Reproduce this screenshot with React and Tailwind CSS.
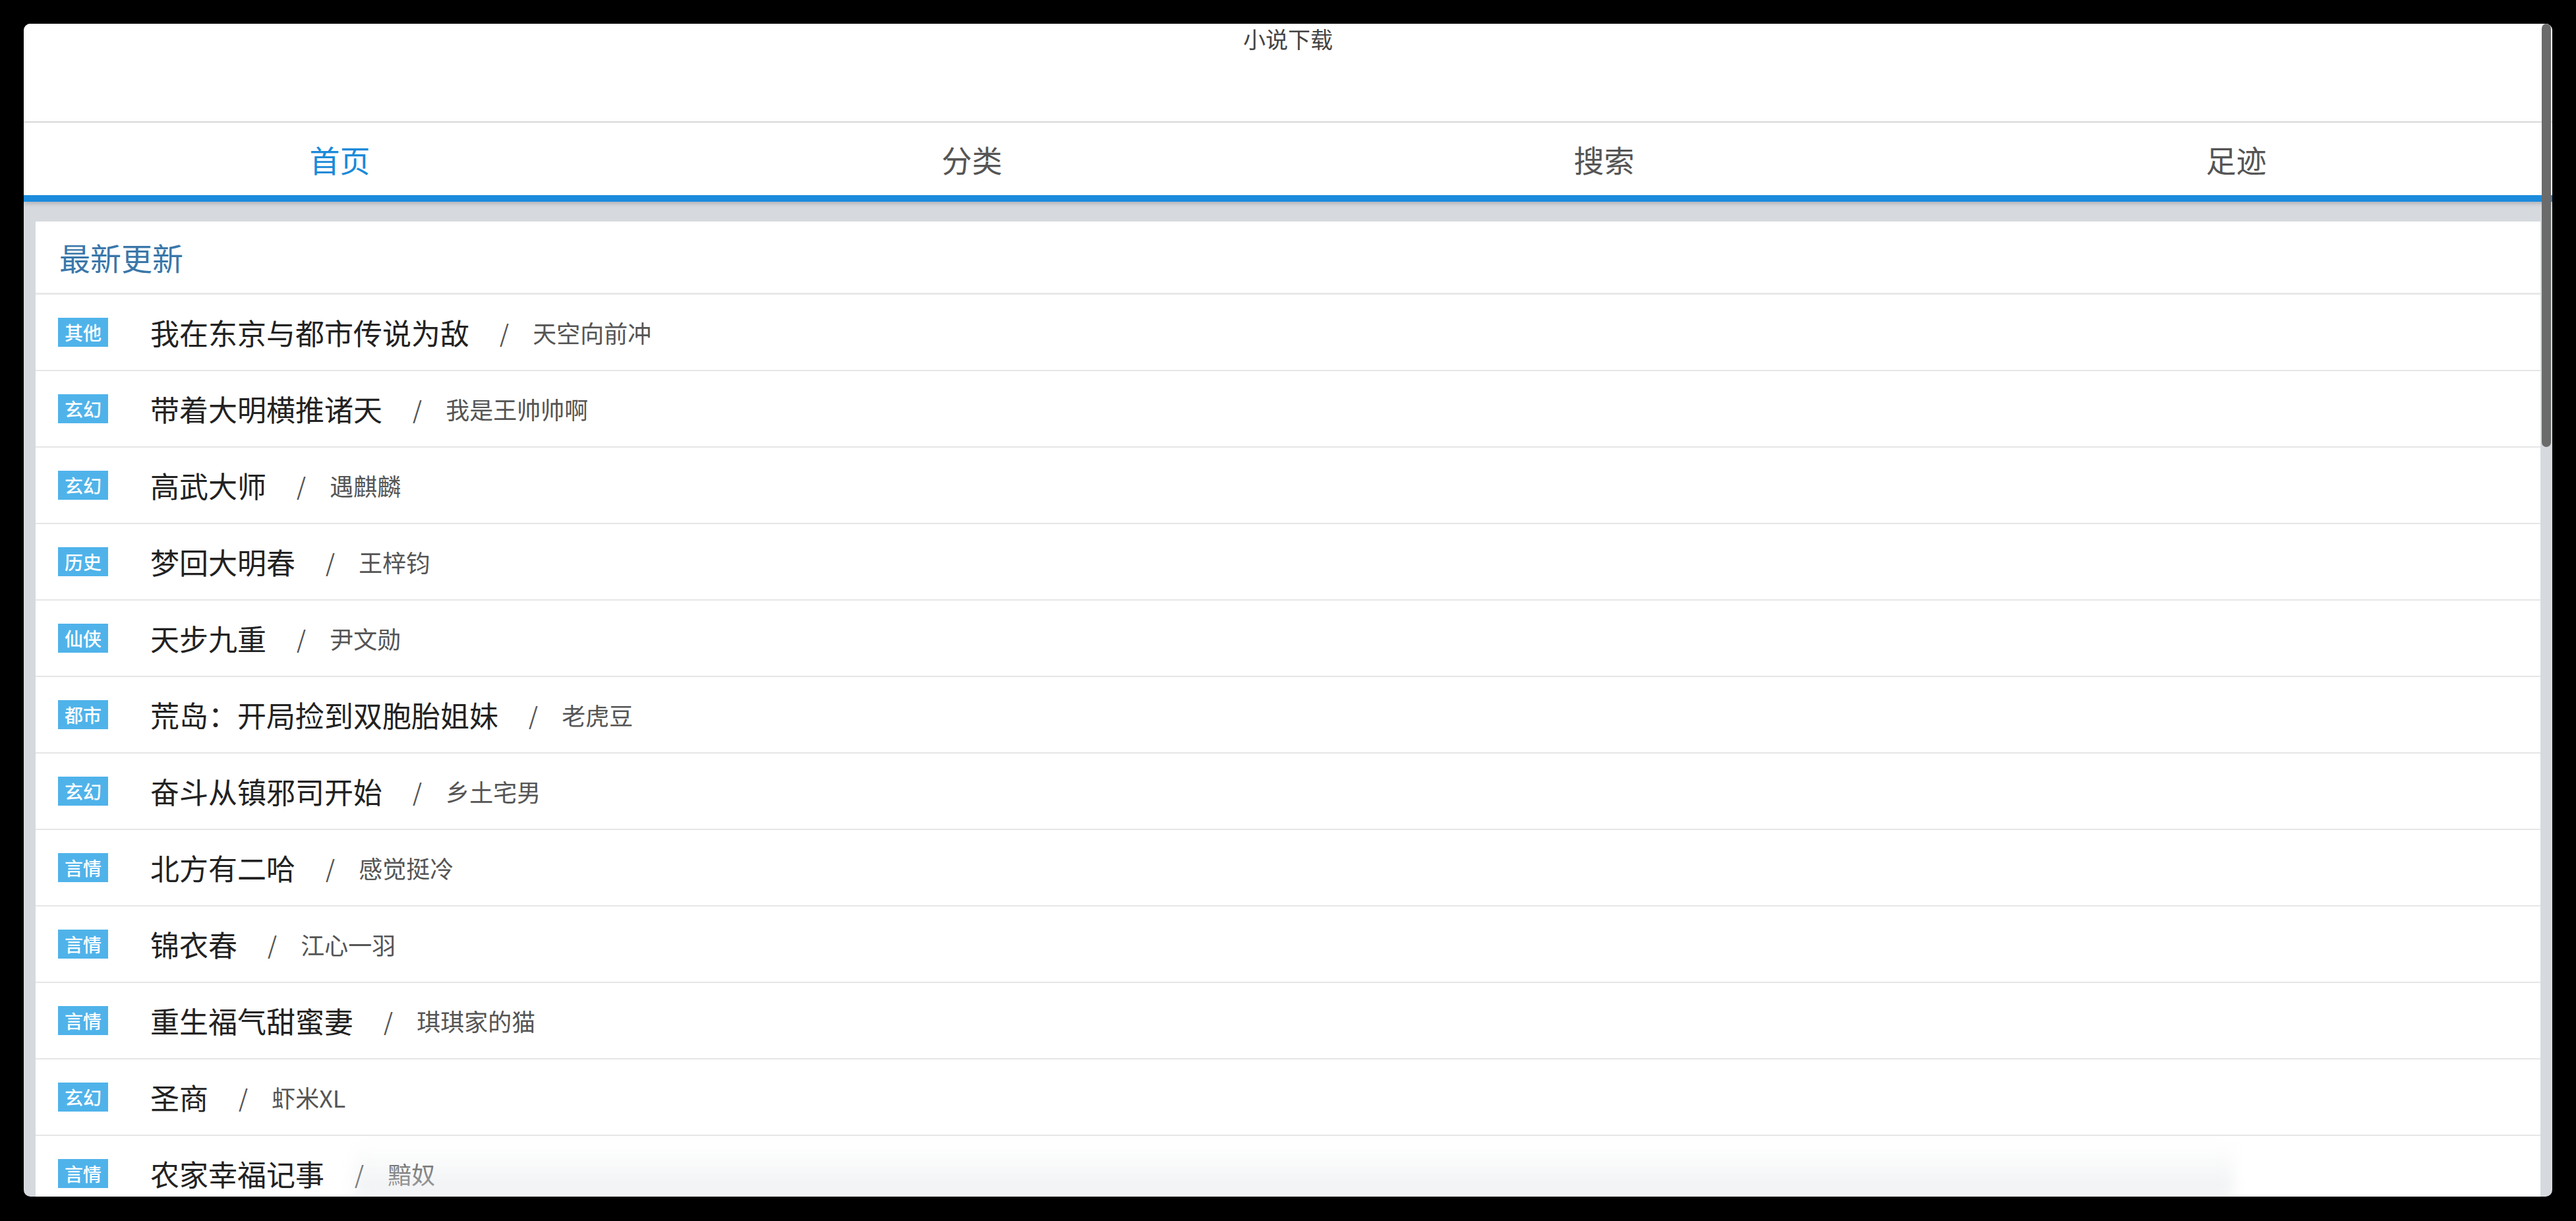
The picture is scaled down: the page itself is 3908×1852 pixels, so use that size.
import React from 'react';

const navItems = ['首页', '分类', '搜索', '足迹'];

const books = [
  { tag: '其他', title: '我在东京与都市传说为敌', author: '天空向前冲' },
  { tag: '玄幻', title: '带着大明横推诸天', author: '我是王帅帅啊' },
  { tag: '玄幻', title: '高武大师', author: '遇麒麟' },
  { tag: '历史', title: '梦回大明春', author: '王梓钧' },
  { tag: '仙侠', title: '天步九重', author: '尹文勋' },
  { tag: '都市', title: '荒岛：开局捡到双胞胎姐妹', author: '老虎豆' },
  { tag: '玄幻', title: '奋斗从镇邪司开始', author: '乡土宅男' },
  { tag: '言情', title: '北方有二哈', author: '感觉挺冷' },
  { tag: '言情', title: '锦衣春', author: '江心一羽' },
  { tag: '言情', title: '重生福气甜蜜妻', author: '琪琪家的猫' },
  { tag: '玄幻', title: '圣商', author: '虾米XL' },
  { tag: '言情', title: '农家幸福记事', author: '黯奴' },
];

function BookRow({ book }) {
  return (
    <div className="h-[116px] shrink-0 flex items-center pl-[34px] border-b-2 border-[#e6e6e6]">
      <span className="w-[76px] h-[44px] flex items-center justify-center bg-[#4fb3ea] text-white text-[28px] font-medium leading-none">
        {book.tag}
      </span>
      <span className="ml-[64px] text-[44px] text-[#222] leading-none">{book.title}</span>
      <span className="ml-[46px] mr-[36px] text-[36px] text-[#555] leading-none">/</span>
      <span className="text-[36px] text-[#555] leading-none">{book.author}</span>
    </div>
  );
}

export default function App() {
  return (
    <div className="w-[3908px] h-[1852px] bg-black pt-[36px] pl-[36px] font-['Noto_Sans_CJK_SC','Noto_Sans',sans-serif]">
      <div className="relative w-[3836px] h-[1779px] rounded-[10px] overflow-hidden bg-[#d6dadf] flex flex-col">
        {/* top title */}
        <div className="h-[150px] shrink-0 bg-white border-b-2 border-[#dcdcdc] text-center">
          <div className="pt-[2px] text-[34px] leading-[42px] text-[#444]">小说下载</div>
        </div>

        {/* tabs */}
        <div className="h-[120px] shrink-0 grid grid-cols-4 bg-white border-b-[10px] border-[#1b8bdc] shadow-[0_3px_6px_rgba(0,0,0,0.18)] relative z-10">
          {navItems.map((item, i) => (
            <div
              key={item}
              className={`flex items-center justify-center text-[46px] ${i === 0 ? 'text-[#1b8ad9]' : 'text-[#555]'}`}
            >
              {item}
            </div>
          ))}
        </div>

        {/* list */}
        <div className="flex-1 min-h-0 px-[18px] pt-[30px]">
          <div className="bg-white h-full flex flex-col overflow-hidden">
            <div className="h-[111px] shrink-0 flex items-center pl-[36px] border-b-[3px] border-[#e8e8e8] text-[47px] text-[#3a77a9]">
              最新更新
            </div>
            {books.map((b, i) => (
              <BookRow key={i} book={b} />
            ))}
          </div>
        </div>

        {/* fuzzy shadow near bottom */}
        <div className="absolute bottom-0 left-[502px] w-[2850px] h-[80px] bg-linear-to-b from-transparent to-[#e3e6e9]/60 blur-[10px] pointer-events-none" />

        {/* overlay scrollbar */}
        <div className="absolute top-0 right-[2px] w-[14px] h-[642px] rounded-full bg-[#6b6b6b] z-20" />
      </div>
    </div>
  );
}
